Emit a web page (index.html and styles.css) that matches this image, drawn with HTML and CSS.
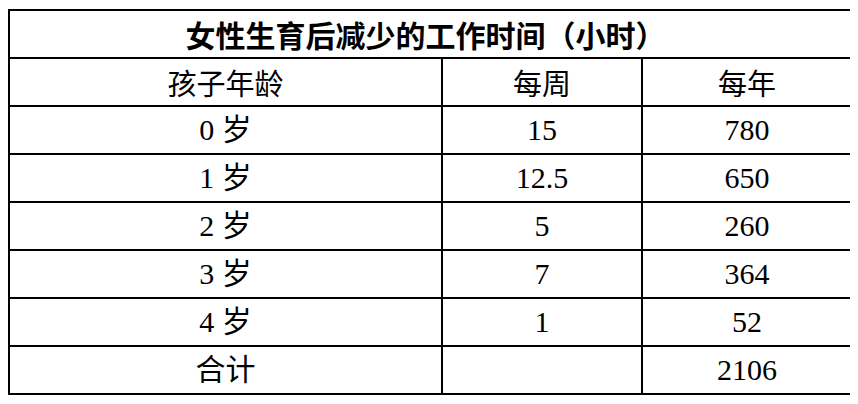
FILE: index.html
```html
<!DOCTYPE html>
<html lang="zh-CN">
<head>
<meta charset="utf-8">
<title>女性生育后减少的工作时间</title>
<link rel="stylesheet" href="styles.css">
</head>
<body>
<table class="hours">
  <colgroup>
    <col class="c-age">
    <col class="c-week">
    <col class="c-year">
  </colgroup>
  <thead>
    <tr><th class="title" colspan="3">女性生育后减少的工作时间（小时）</th></tr>
    <tr class="head"><td>孩子年龄</td><td>每周</td><td>每年</td></tr>
  </thead>
  <tbody>
    <tr><td>0 岁</td><td>15</td><td>780</td></tr>
    <tr><td>1 岁</td><td>12.5</td><td>650</td></tr>
    <tr><td>2 岁</td><td>5</td><td>260</td></tr>
    <tr><td>3 岁</td><td>7</td><td>364</td></tr>
    <tr><td>4 岁</td><td>1</td><td>52</td></tr>
    <tr><td>合计</td><td></td><td>2106</td></tr>
  </tbody>
</table>
</body>
</html>
```
FILE: styles.css
```css
html, body {
  background: #fff;
}
body {
  margin: 9px 8px 0 8px;
}
.hours {
  border-collapse: collapse;
  table-layout: fixed;
  width: 843px;
  color: #000;
  font-family: "Liberation Serif", "Noto Sans CJK SC", serif;
  font-size: 30px;
}
.c-age { width: 433px; }
.c-week { width: 200px; }
.c-year { width: 210px; }
.hours th,
.hours td {
  border: 2px solid #000;
  padding: 0;
  height: 46px;
  text-align: center;
  vertical-align: middle;
  line-height: 1;
  font-weight: normal;
}
.hours .title {
  font-family: "Noto Sans CJK SC", sans-serif;
  font-weight: 700;
  font-size: 30px;
  padding-right: 10px;
}
.hours .head td {
  font-family: "Noto Sans CJK SC", sans-serif;
  font-weight: 400;
  font-size: 29px;
}
```
